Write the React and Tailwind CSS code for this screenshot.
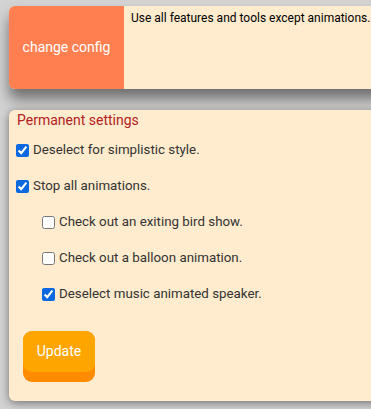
import { useState } from 'react';

const OPTIONS = [
  { label: 'Deselect for simplistic style.', checked: true, nested: false },
  { label: 'Stop all animations.', checked: true, nested: false },
  { label: 'Check out an exiting bird show.', checked: false, nested: true },
  { label: 'Check out a balloon animation.', checked: false, nested: true },
  { label: 'Deselect music animated speaker.', checked: true, nested: true },
];

export default function App() {
  const [values, setValues] = useState(OPTIONS.map((o) => o.checked));

  return (
    <div className="w-[371px] h-[409px] overflow-hidden bg-[#d3d3d3] pt-[6px] pl-[9px] font-['Roboto',sans-serif]">
      {/* Config card */}
      <div className="flex w-[420px] h-[83px] rounded-[6px] bg-[#ffebcd] overflow-hidden shadow-[0_10px_14px_#6f6f6f]">
        <button className="w-[115px] shrink-0 bg-[#ff7f50] text-white text-[14px] flex items-center justify-center">
          change config
        </button>
        <div className="pl-[7px] pt-[4px] text-[12px] text-black leading-[16px]">
          Use all features and tools except animations.
        </div>
      </div>

      {/* Settings card */}
      <div className="mt-[21px] w-[420px] h-[291px] rounded-[6px] bg-[#ffebcd] shadow-[0_2px_10px_#6f6f6f] pl-[7px] pt-[1px]">
        <h2 className="text-[14px] text-[#b22222] leading-[18px] pl-[1px]">Permanent settings</h2>
        <div className="flex flex-col mt-[12px] gap-[18px]">
          {OPTIONS.map((o, i) => (
            <label
              key={o.label}
              className={`flex items-center text-[13.33px] leading-[18px] text-[#333] ${o.nested ? 'pl-[26px]' : ''}`}
            >
              <input
                type="checkbox"
                checked={values[i]}
                onChange={() => setValues(values.map((v, j) => (j === i ? !v : v)))}
                className="w-[13px] h-[13px] m-0 mr-[4px] accent-[#0b68e0]"
              />
              {o.label}
            </label>
          ))}
        </div>
        <button className="mt-[28px] ml-[7px] w-[72px] h-[51px] rounded-[9px] bg-[#ff8c00] overflow-hidden flex flex-col">
          <span className="h-[41px] w-full rounded-[9px] bg-[#ffa500] text-white text-[14px] flex items-center justify-center">
            Update
          </span>
        </button>
      </div>
    </div>
  );
}
